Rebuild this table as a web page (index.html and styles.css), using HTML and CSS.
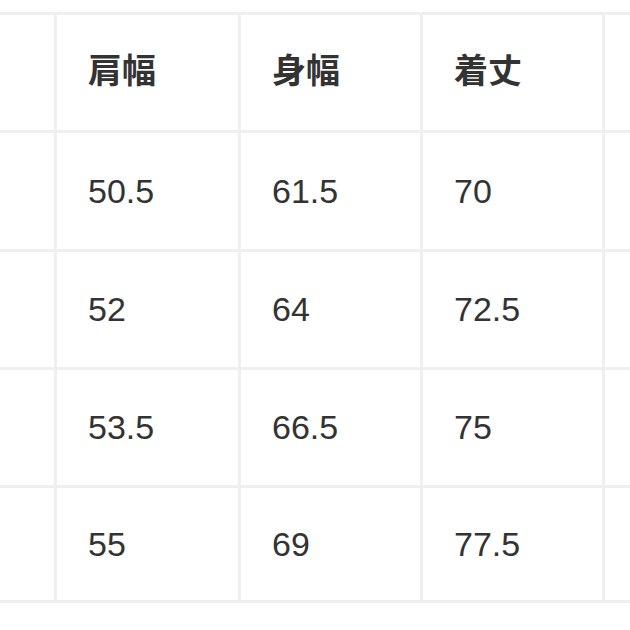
FILE: index.html
```html
<!DOCTYPE html>
<html lang="ja">
<head>
<meta charset="utf-8">
<title>サイズ表</title>
<link rel="stylesheet" href="styles.css">
</head>
<body>
<div class="sheet">
  <div class="size-table">
    <div class="cell"></div>
    <div class="cell head">肩幅</div>
    <div class="cell head">身幅</div>
    <div class="cell head">着丈</div>
    <div class="cell edge"></div>

    <div class="cell"></div>
    <div class="cell">50.5</div>
    <div class="cell">61.5</div>
    <div class="cell">70</div>
    <div class="cell edge"></div>

    <div class="cell"></div>
    <div class="cell">52</div>
    <div class="cell">64</div>
    <div class="cell">72.5</div>
    <div class="cell edge"></div>

    <div class="cell"></div>
    <div class="cell">53.5</div>
    <div class="cell">66.5</div>
    <div class="cell">75</div>
    <div class="cell edge"></div>

    <div class="cell"></div>
    <div class="cell">55</div>
    <div class="cell">69</div>
    <div class="cell">77.5</div>
    <div class="cell edge"></div>
  </div>
</div>
</body>
</html>
```
FILE: styles.css
```css
html, body {
  margin: 0;
  padding: 0;
  background: #ffffff;
}
body {
  width: 630px;
  height: 630px;
  overflow: hidden;
}
.sheet {
  padding-top: 12px;
}
.size-table {
  display: grid;
  grid-template-columns: 54px 181px 179px 179px 25px;
  grid-template-rows: 115px 116px 115px 115px 112px;
  gap: 3px;
  padding: 3px 0;
  background: #efefef;
}
.cell {
  background: #ffffff;
  display: flex;
  align-items: center;
  padding-left: 31px;
  font-family: "Liberation Sans", Arial, "Noto Sans CJK JP", sans-serif;
  font-size: 34px;
  color: #333333;
}
.edge {
  padding-left: 0;
}
.head {
  font-family: "Noto Sans CJK JP", "Liberation Sans", sans-serif;
  font-weight: 700;
  font-size: 34px;
  padding-bottom: 8px;
  box-sizing: border-box;
}
```
